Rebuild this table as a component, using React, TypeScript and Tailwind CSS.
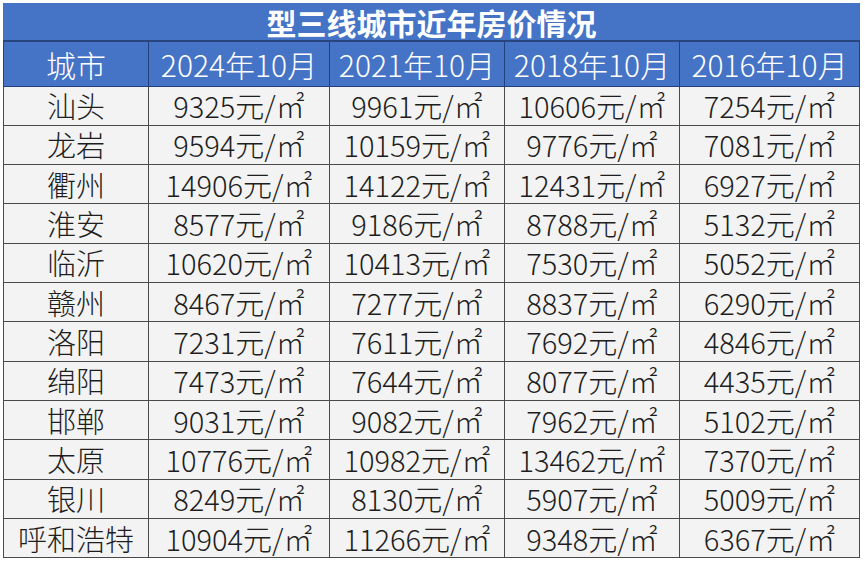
import React from "react";

const rows: [string, string, string, string, string][] = [
  ["汕头", "9325", "9961", "10606", "7254"],
  ["龙岩", "9594", "10159", "9776", "7081"],
  ["衢州", "14906", "14122", "12431", "6927"],
  ["淮安", "8577", "9186", "8788", "5132"],
  ["临沂", "10620", "10413", "7530", "5052"],
  ["赣州", "8467", "7277", "8837", "6290"],
  ["洛阳", "7231", "7611", "7692", "4846"],
  ["绵阳", "7473", "7644", "8077", "4435"],
  ["邯郸", "9031", "9082", "7962", "5102"],
  ["太原", "10776", "10982", "13462", "7370"],
  ["银川", "8249", "8130", "5907", "5009"],
  ["呼和浩特", "10904", "11266", "9348", "6367"],
];

const headers = ["城市", "2024年10月", "2021年10月", "2018年10月", "2016年10月"];
const widths = ["w-[145px]", "w-[181px]", "w-[175px]", "w-[175px]", "w-[180px]"];

export default function App() {
  return (
    <div
      className="w-[865px] h-[566px] bg-white pt-[3px] pl-[3px]"
      style={{ fontFamily: '"Noto Sans CJK SC", "Noto Sans", sans-serif' }}
    >
      <table className="border-collapse table-fixed w-[857px]">
        <colgroup>
          {widths.map((w, i) => (
            <col key={i} className={w} />
          ))}
        </colgroup>
        <thead>
          <tr className="h-[38px] bg-[#4573c6]">
            <th
              colSpan={5}
              className="border-l border-r border-b-2 border-l-[#6b6b6b] border-r-[#6b6b6b] border-b-[#27457e] p-0 text-[30px] font-bold leading-none text-white"
            >
              型三线城市近年房价情况
            </th>
          </tr>
          <tr className="h-[45px] bg-[#4573c6]">
            {headers.map((h, i) => (
              <th
                key={i}
                className="border border-[#23407a] p-0 text-[30px] font-light leading-none text-white"
              >
                {h}
              </th>
            ))}
          </tr>
        </thead>
        <tbody>
          {rows.map((r) => (
            <tr key={r[0]} className="h-[39.33px] bg-[#f3f3f3]">
              <td className="border border-[#4a4a4a] p-0 text-center text-[29px] font-light leading-none text-[#1e1e1e]">
                {r[0]}
              </td>
              {r.slice(1).map((v, i) => (
                <td
                  key={i}
                  className="border border-[#4a4a4a] p-0 text-center text-[29px] font-light leading-none text-[#1e1e1e]"
                >
                  {v}元/㎡
                </td>
              ))}
            </tr>
          ))}
        </tbody>
      </table>
    </div>
  );
}
